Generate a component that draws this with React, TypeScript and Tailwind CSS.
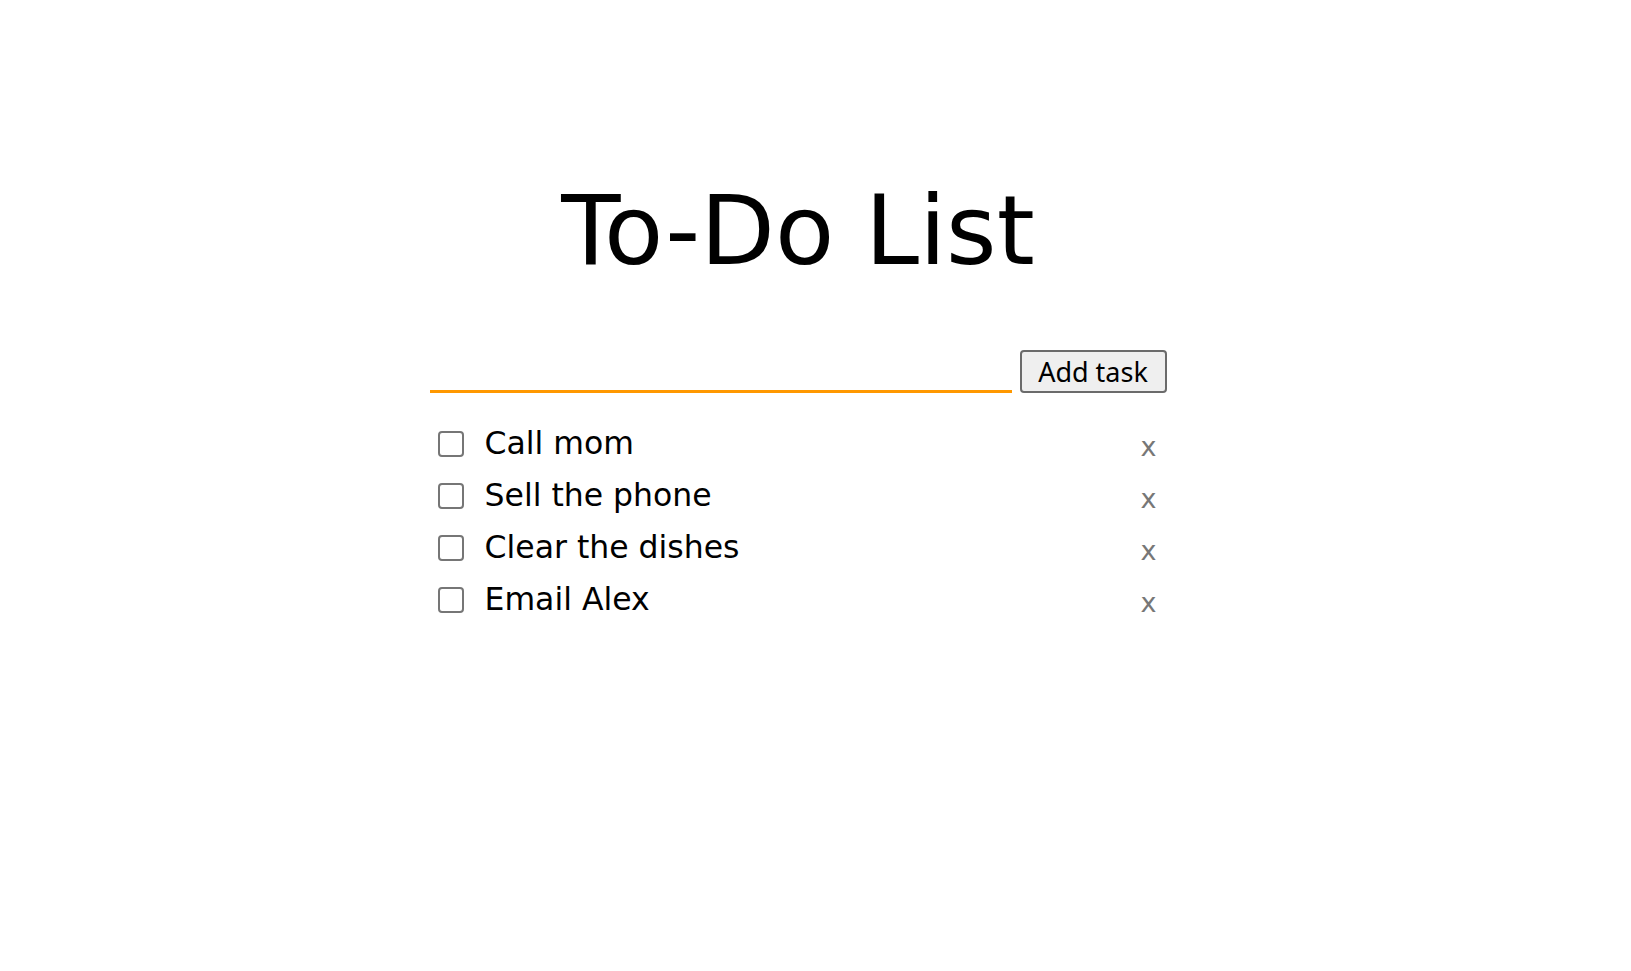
import { useState } from 'react'

type Task = { id: number; text: string; done: boolean }

const initialTasks: Task[] = [
  { id: 1, text: 'Call mom', done: false },
  { id: 2, text: 'Sell the phone', done: false },
  { id: 3, text: 'Clear the dishes', done: false },
  { id: 4, text: 'Email Alex', done: false },
]

export default function App() {
  const [tasks, setTasks] = useState<Task[]>(initialTasks)
  const [draft, setDraft] = useState('')

  const addTask = () => {
    const text = draft.trim()
    if (!text) return
    setTasks((t) => [...t, { id: Date.now(), text, done: false }])
    setDraft('')
  }

  return (
    <div
      className="flex min-h-screen justify-center bg-white pr-[35px] text-black"
      style={{ fontFamily: '"DejaVu Sans", "Noto Sans", sans-serif' }}
    >
      <div className="w-[737px]">
        <h1 className="mt-[182px] text-center text-[97px] leading-none font-normal">To-Do List</h1>

        <div className="mt-[71px] flex h-[43px] items-end gap-[8px]">
          <input
            value={draft}
            onChange={(e) => setDraft(e.target.value)}
            onKeyDown={(e) => e.key === 'Enter' && addTask()}
            className="h-[40px] flex-1 border-b-[3px] border-[#ff9800] bg-transparent px-1 text-[28px] outline-none"
          />
          <button
            type="button"
            onClick={addTask}
            className="h-[43px] w-[147px] rounded-[4px] border-2 border-[#6b6b6b] bg-[#efefef] text-[27px] leading-none"
            style={{ fontFamily: '"Noto Sans", sans-serif' }}
          >
            Add task
          </button>
        </div>

        <ul className="mt-[25px]">
          {tasks.map((t) => (
            <li key={t.id} className="flex h-[52px] items-center pr-[10px] pl-[8px]">
              <input
                type="checkbox"
                checked={t.done}
                onChange={() =>
                  setTasks((all) => all.map((x) => (x.id === t.id ? { ...x, done: !x.done } : x)))
                }
                className="h-[26px] w-[26px] appearance-none rounded-[4px] border-2 border-[#767676] bg-white checked:bg-[#767676]"
              />
              <span className={`ml-[21px] flex-1 text-[31.5px] leading-none ${t.done ? 'line-through' : ''}`}>
                {t.text}
              </span>
              <button
                type="button"
                onClick={() => setTasks((all) => all.filter((x) => x.id !== t.id))}
                className="mt-[5px] text-[27px] leading-none text-[#777777]"
              >
                x
              </button>
            </li>
          ))}
        </ul>
      </div>
    </div>
  )
}
